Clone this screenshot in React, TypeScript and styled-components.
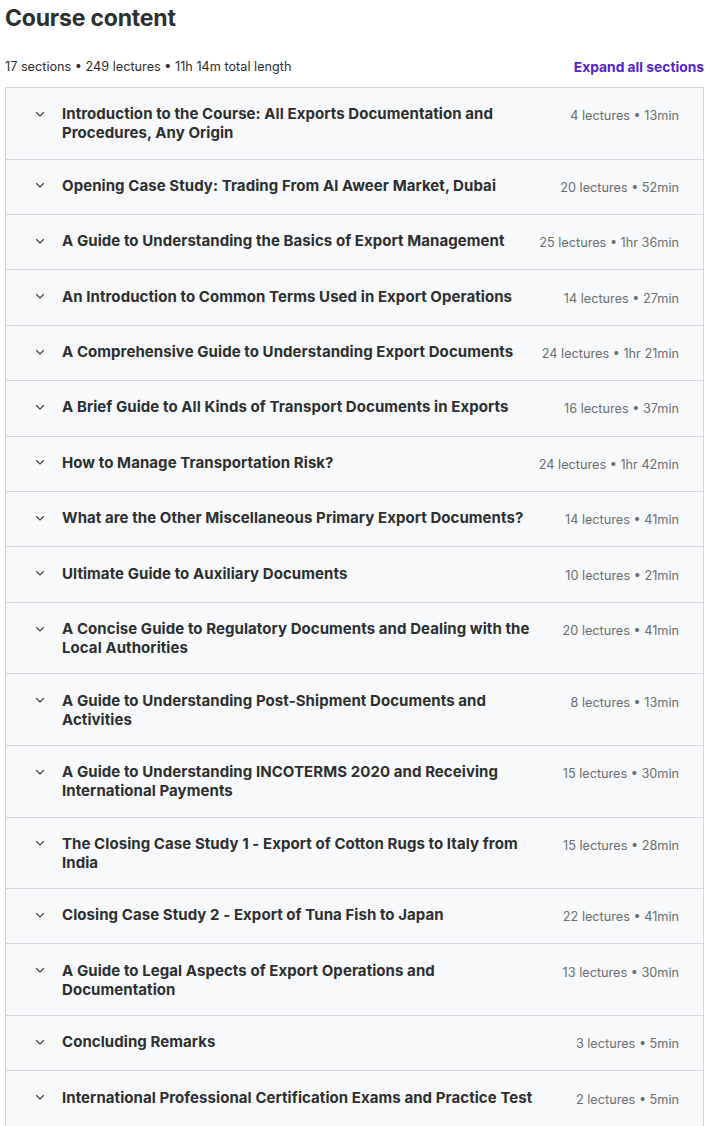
import React from 'react';
import styled, { createGlobalStyle } from 'styled-components';

type Section = {
  title: string
  lectures: number
  length: string
}

const sections: Section[] = [
  { title: 'Introduction to the Course: All Exports Documentation and Procedures, Any Origin', lectures: 4, length: '13min' },
  { title: 'Opening Case Study: Trading From Al Aweer Market, Dubai', lectures: 20, length: '52min' },
  { title: 'A Guide to Understanding the Basics of Export Management', lectures: 25, length: '1hr 36min' },
  { title: 'An Introduction to Common Terms Used in Export Operations', lectures: 14, length: '27min' },
  { title: 'A Comprehensive Guide to Understanding Export Documents', lectures: 24, length: '1hr 21min' },
  { title: 'A Brief Guide to All Kinds of Transport Documents in Exports', lectures: 16, length: '37min' },
  { title: 'How to Manage Transportation Risk?', lectures: 24, length: '1hr 42min' },
  { title: 'What are the Other Miscellaneous Primary Export Documents?', lectures: 14, length: '41min' },
  { title: 'Ultimate Guide to Auxiliary Documents', lectures: 10, length: '21min' },
  { title: 'A Concise Guide to Regulatory Documents and Dealing with the Local Authorities', lectures: 20, length: '41min' },
  { title: 'A Guide to Understanding Post-Shipment Documents and Activities', lectures: 8, length: '13min' },
  { title: 'A Guide to Understanding INCOTERMS 2020 and Receiving International Payments', lectures: 15, length: '30min' },
  { title: 'The Closing Case Study 1 - Export of Cotton Rugs to Italy from India', lectures: 15, length: '28min' },
  { title: 'Closing Case Study 2 - Export of Tuna Fish to Japan', lectures: 22, length: '41min' },
  { title: 'A Guide to Legal Aspects of Export Operations and Documentation', lectures: 13, length: '30min' },
  { title: 'Concluding Remarks', lectures: 3, length: '5min' },
  { title: 'International Professional Certification Exams and Practice Test', lectures: 2, length: '5min' },
]

const GlobalStyle = createGlobalStyle`
  body {
    margin: 0;
    background: #fff;
    font-family: Inter, "Liberation Sans", sans-serif;
    color: #2d2f31;
  }
`

const Chevron = () => (
  <svg width="12" height="12" viewBox="0 0 24 24" fill="none" stroke="#3e4143" strokeWidth="2.2" strokeLinecap="round" strokeLinejoin="round">
    <path d="M5 9l7 7 7-7" />
  </svg>
)

export default function App() {
  return (
    <>
      <GlobalStyle />
      <Page>
        <Heading>Course content</Heading>
        <Summary>
          <span>17 sections • 249 lectures • 11h 14m total length</span>
          <ExpandAll>Expand all sections</ExpandAll>
        </Summary>
        <Accordion>
          {sections.map(s => (
            <Row key={s.title}>
              <Toggle><Chevron /></Toggle>
              <Title>{s.title}</Title>
              <Meta>{s.lectures} lectures • {s.length}</Meta>
            </Row>
          ))}
        </Accordion>
      </Page>
    </>
  )
}

const Page = styled.div`
  padding: 0 1px 0 5px;
`

const Heading = styled.h2`
  margin: 0;
  padding-top: 4px;
  font-size: 23px;
  line-height: 28px;
  font-weight: 700;
  letter-spacing: -0.2px;
`

const Summary = styled.div`
  display: flex;
  justify-content: space-between;
  align-items: center;
  margin-top: 26px;
  margin-bottom: 11px;
  font-size: 12.7px;
  line-height: 18px;
`

const ExpandAll = styled.button`
  border: 0;
  background: none;
  padding: 0;
  font: inherit;
  font-size: 13.8px;
  font-weight: 700;
  color: #5624d0;
  cursor: pointer;
`

const Accordion = styled.div`
  border: 1px solid #d1d7dc;
  border-bottom: 0;
`

const Row = styled.div`
  display: flex;
  align-items: flex-start;
  min-height: 55.4px;
  box-sizing: border-box;
  padding: 16.3px 24px 16.3px 28px;
  background: #f7f9fa;
  border-bottom: 1px solid #d1d7dc;
`

const Toggle = styled.span`
  display: flex;
  align-items: center;
  height: 19px;
  width: 12px;
  margin-right: 16px;
  flex-shrink: 0;
`

const Title = styled.h3`
  flex: 1;
  margin: 0;
  font-size: 15px;
  line-height: 19px;
  font-weight: 700;
  letter-spacing: 0.07px;
  color: #2d2f31;
`

const Meta = styled.span`
  flex-shrink: 0;
  margin-left: 24px;
  padding-top: 2px;
  font-size: 12.7px;
  line-height: 19px;
  color: #6a6f73;
`
